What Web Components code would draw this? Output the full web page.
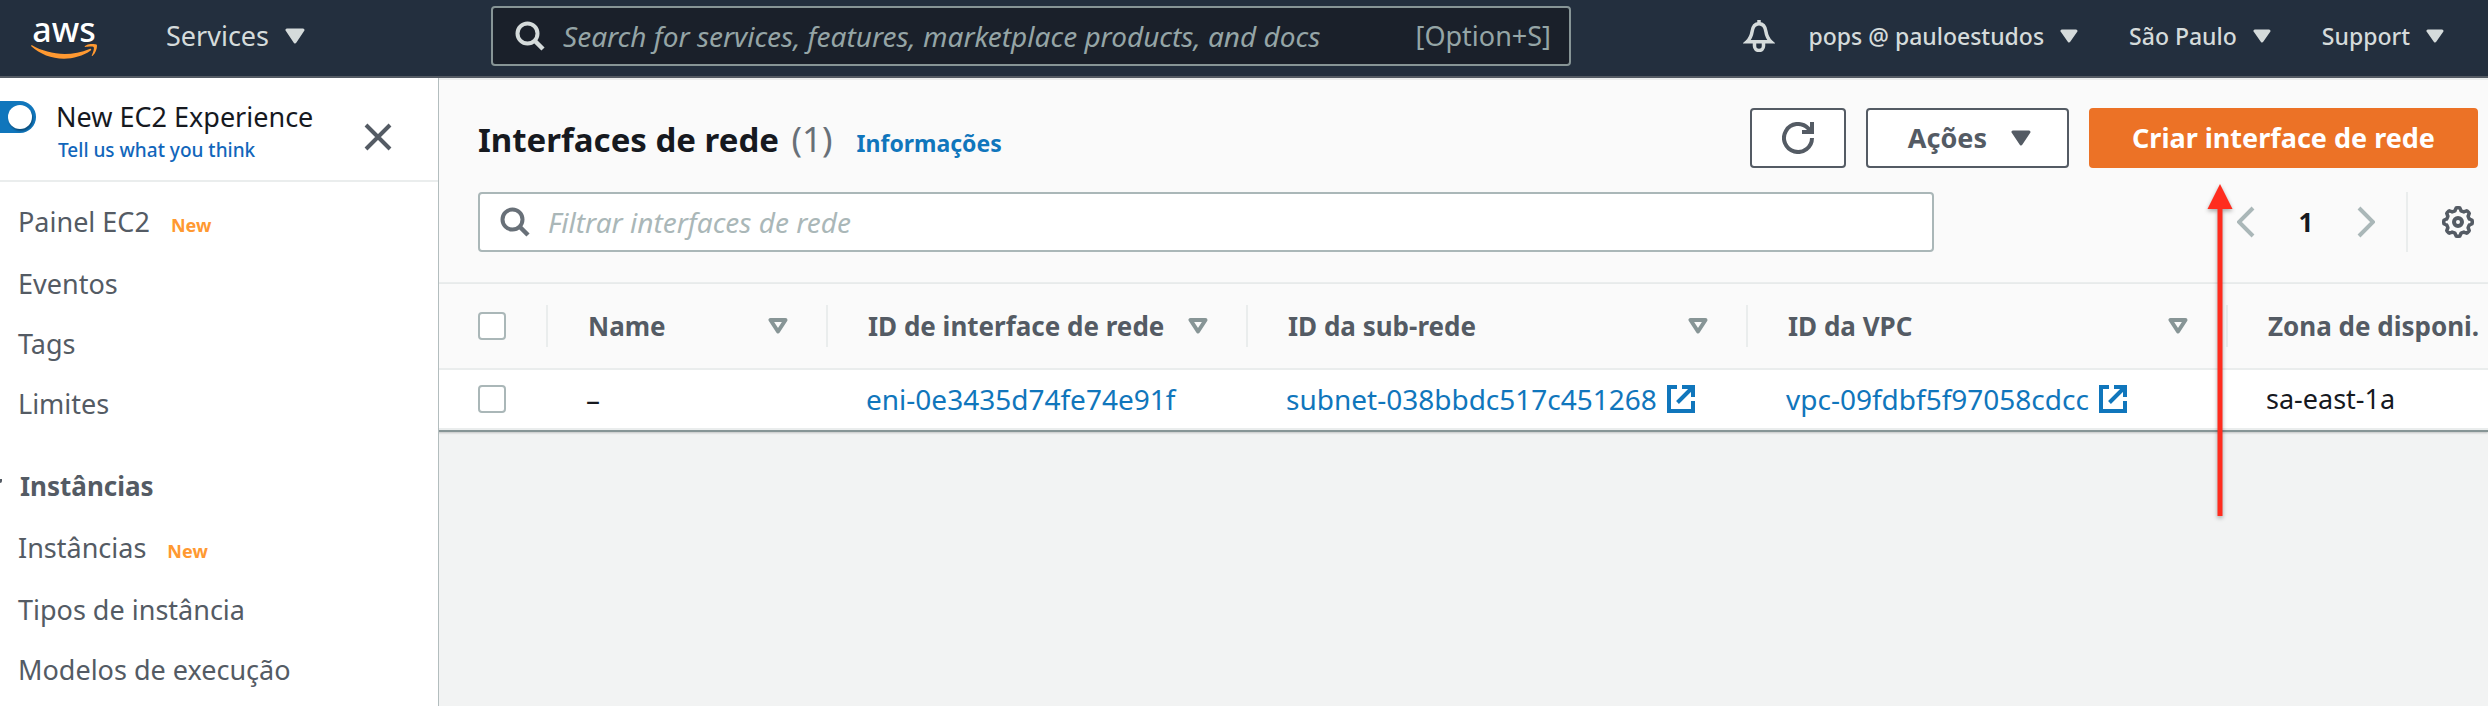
<!DOCTYPE html>
<html lang="pt-BR">
<head>
<meta charset="utf-8">
<title>Interfaces de rede | EC2</title>
<style>
  body { margin: 0; background: #f2f3f3; color: #16191f; font-family: "Noto Sans", "Open Sans", sans-serif; }
</style>
</head>
<body>
<ec2-console></ec2-console>

<script>
const define = (name, html, setup) => customElements.define(name, class extends HTMLElement {
  connectedCallback() {
    if (this.shadowRoot) return;
    const template = document.createElement('template');
    template.innerHTML = `<style>*{box-sizing:border-box}</style>` + (typeof html === 'function' ? html(this) : html);
    this.attachShadow({ mode: 'open' }).append(template.content.cloneNode(true));
    if (setup) setup(this);
  }
});

/* Outline of the settings gear: a circle whose radius swells at eight teeth. */
const gearPath = () => {
  let d = '';
  for (let i = 0; i < 96; i++) {
    const a = i / 96 * Math.PI * 2;
    const r = 12.9 + 1.4 * Math.tanh(2.5 * Math.cos(8 * a));
    d += (i ? 'L' : 'M') + (16 + r * Math.cos(a)).toFixed(2) + ' ' + (16 + r * Math.sin(a)).toFixed(2);
  }
  return d + 'Z';
};

const icons = {
  caret: [20, 16, '<path d="M2 2H18L10 14Z" fill="currentColor" stroke="currentColor" stroke-width="3" stroke-linejoin="round"/>'],
  'caret-small': [18, 14, '<path d="M2 2H16L9 12Z" fill="currentColor" stroke="currentColor" stroke-width="3" stroke-linejoin="round"/>'],
  sort: [20, 16, '<path d="M2.5 2H17.500L10 13.500Z" fill="none" stroke="currentColor" stroke-width="4" stroke-linejoin="round"/>'],
  search: [30, 30, '<circle cx="12.500" cy="12.500" r="10" fill="none" stroke="currentColor" stroke-width="4"/><path d="M19.500 19.500L28 28" stroke="currentColor" stroke-width="4.500"/>'],
  close: [28, 28, '<path d="M2 2L26 26M26 2L2 26" stroke="currentColor" stroke-width="4" fill="none"/>'],
  bell: [32, 32, '<g fill="none" stroke="currentColor" stroke-width="3.500"><path d="M4 21.700H28C24.500 18.500 23.500 15.500 22.900 11.500C22.200 6.300 19.500 3.700 16 3.700S9.800 6.300 9.100 11.500C8.500 15.500 7.500 18.500 4 21.700Z" stroke-linejoin="miter"/><path d="M16 0V4"/><path d="M11.500 22V26a4.500 4.500 0 0 0 9 0V22"/></g>'],
  refresh: [32, 32, '<g fill="none" stroke="currentColor" stroke-width="4"><path d="M30 16A14 14 0 1 1 26 6.200L28.500 9"/><path d="M30 0V10H20"/></g>'],
  prev: [18, 32, '<path d="M16 2L2 16L16 30" fill="none" stroke="currentColor" stroke-width="4"/>'],
  next: [18, 32, '<path d="M2 2L16 16L2 30" fill="none" stroke="currentColor" stroke-width="4"/>'],
  gear: [32, 32, `<path d="${gearPath()}" fill="none" stroke="currentColor" stroke-width="3.500"/><circle cx="16" cy="16" r="4" fill="none" stroke="currentColor" stroke-width="4"/>`],
  external: [28, 28, '<path d="M10 2H2V26H26V16M15 2H26V12M10.500 17.500L25 3" fill="none" stroke="currentColor" stroke-width="4"/>'],
  smile: [66, 15, '<g transform="scale(2.75) translate(0 -13.800)" fill="#ff9931"><path d="M21.698 16.207c-2.626 1.940-6.442 2.969-9.722 2.969-4.598 0-8.740-1.700-11.870-4.526-.247-.223-.024-.527.272-.351 3.384 1.963 7.559 3.153 11.877 3.153 2.914 0 6.114-.607 9.060-1.852.439-.2.814.287.383.607z"/><path d="M22.792 14.961c-.336-.43-2.220-.207-3.074-.103-.255.032-.295-.192-.063-.36 1.500-1.053 3.967-.75 4.254-.399.287.36-.08 2.826-1.485 4.007-.215.184-.423.088-.327-.151.320-.79 1.030-2.570.695-2.994z"/></g>'],
  arrow: [40, 340, '<path d="M20 22V332" stroke="#ff2c1e" stroke-width="5"/><path d="M20 0L32.500 25H7.500Z" fill="#ff2c1e"/>'],
};

define('ui-icon', host => {
  const [w, h, body] = icons[host.getAttribute('name')];
  return `<style>:host{display:inline-flex;flex:none}svg{display:block}</style>
    <svg width="${w}" height="${h}" viewBox="0 0 ${w} ${h}" aria-hidden="true">${body}</svg>`;
});

define('menu-button', host => `
  <style>
    :host { display: block; flex: none; }
    button { display: flex; align-items: center; gap: 16px; padding: 0; border: 0; background: none; color: #d5dbdb; font: 500 23px/32px "Noto Sans", sans-serif; white-space: nowrap; }
    :host([large]) button { font-size: 27px; font-weight: 400; }
  </style>
  <button type="button" aria-haspopup="true"><slot></slot><ui-icon name="${host.hasAttribute('large') ? 'caret' : 'caret-small'}"></ui-icon></button>`);

define('search-field', host => `
  <style>
    :host { display: block; min-width: 0; }
    .box { display: flex; align-items: center; gap: 18px; height: 60px; padding: 0 20px; border: 2px solid #aab7b8; border-radius: 4px; background: #fff; color: #687078; }
    input { flex: 1; min-width: 0; padding: 0; border: 0; outline: 0; background: none; color: inherit; font: 400 28px/40px "Noto Sans", sans-serif; }
    input::placeholder { color: #aab7b8; font-style: italic; opacity: 1; }
    :host([dark]) .box { padding: 0 18px 0 22px; border-color: #879596; background: #1a202a; color: #d5dbdb; }
    :host([dark]) input::placeholder { color: #95a5a6; }
    ::slotted(*) { flex: none; }
  </style>
  <div class="box"><ui-icon name="search"></ui-icon><input type="text" aria-label="${host.getAttribute('label')}" placeholder="${host.getAttribute('label')}"><slot></slot></div>`);

define('aws-logo', `
  <style>
    :host { display: block; flex: none; }
    a { display: flex; flex-direction: column; align-items: center; width: 66px; color: #fff; text-decoration: none; font: 500 34px/30px "Noto Sans", sans-serif; }
  </style>
  <a href="#"><span>aws</span><ui-icon name="smile"></ui-icon></a>`);

define('top-bar', `
  <style>
    :host { display: block; background: #232f3e; border-bottom: 2px solid #545b64; }
    header { display: flex; align-items: center; height: 76px; padding: 0 44px 4px 31px; }
    menu-button[large] { margin-left: 69px; }
    search-field { flex: 0 1 1080px; margin: 0 24px 0 186px; }
    kbd { color: #95a5a6; font: 400 27px/40px "Noto Sans", sans-serif; }
    .account { display: flex; align-items: center; gap: 51px; margin-left: auto; }
    .bell { display: flex; padding: 0; margin-right: -17px; border: 0; background: none; color: #d5dbdb; }
  </style>
  <header>
    <aws-logo></aws-logo>
    <menu-button large>Services</menu-button>
    <search-field dark label="Search for services, features, marketplace products, and docs"><kbd>[Option+S]</kbd></search-field>
    <div class="account">
      <button class="bell" type="button" aria-label="Notifications"><ui-icon name="bell"></ui-icon></button>
      <menu-button>pops @ pauloestudos</menu-button>
      <menu-button>São Paulo</menu-button>
      <menu-button>Support</menu-button>
    </div>
  </header>`);

define('nav-item', host => `
  <style>
    :host { display: block; }
    a { display: flex; align-items: baseline; gap: 21px; height: 60px; color: #545b64; text-decoration: none; font-size: 27px; line-height: 60px; white-space: nowrap; }
    :host([new]) { padding-bottom: 2px; }
    em { color: #ff9931; font-style: normal; font-size: 18px; font-weight: 700; line-height: 20px; }
  </style>
  <a href="#"><slot></slot>${host.hasAttribute('new') ? '<em>New</em>' : ''}</a>`);

define('side-nav', `
  <style>
    :host { display: block; position: relative; z-index: 1; overflow: hidden; background: #fff; border-right: 1px solid #b3bdbe; }
    .intro { display: flex; justify-content: space-between; align-items: center; height: 104px; padding: 6px 46px 0 0; border-bottom: 2px solid #eaeded; }
    .switch { display: grid; grid-template-columns: 36px auto; column-gap: 20px; align-items: center; }
    .track { display: flex; justify-content: flex-end; }
    input { appearance: none; flex: none; display: flex; justify-content: flex-end; align-items: center; width: 56px; height: 32px; margin: 0; padding: 0 4px; border-radius: 16px; background: #1076bc; }
    input::before { content: ""; width: 24px; height: 24px; border-radius: 50%; background: #fff; box-shadow: 1px 2px 2px #0005; }
    label { font-size: 27px; line-height: 36px; white-space: nowrap; }
    .think { grid-column: 2; padding-left: 2px; color: #1166bb; text-decoration: none; font-size: 19px; font-weight: 500; line-height: 30px; }
    .close { display: flex; margin-top: 10px; padding: 0; border: 0; background: none; color: #545b64; }
    nav { padding: 10px 18px 6px; }
    h2 { display: flex; align-items: center; gap: 18px; margin: 22px 0 2px -16px; color: #545b64; font-size: 26px; font-weight: 700; line-height: 60px; }
    h2::before { content: ""; width: 2px; height: 4px; margin: -10px 0 0 -2px; background: #545b64; border-bottom-right-radius: 2px; }
  </style>
  <div class="intro">
    <div class="switch">
      <span class="track"><input type="checkbox" id="new-experience" role="switch" checked></span>
      <label for="new-experience">New EC2 Experience</label>
      <a class="think" href="#">Tell us what you think</a>
    </div>
    <button class="close" type="button" aria-label="Fechar"><ui-icon name="close"></ui-icon></button>
  </div>
  <nav>
    <nav-item new>Painel EC2</nav-item>
    <nav-item>Eventos</nav-item>
    <nav-item>Tags</nav-item>
    <nav-item>Limites</nav-item>
    <h2>Instâncias</h2>
    <nav-item new>Instâncias</nav-item>
    <nav-item>Tipos de instância</nav-item>
    <nav-item>Modelos de execução</nav-item>
  </nav>`);

define('action-button', host => `
  <style>
    :host { display: block; flex: none; }
    button { display: flex; align-items: center; gap: 24px; height: 60px; padding: 0 36px 0 40px; border: 2px solid #545b64; border-radius: 4px; background: #fff; color: #545b64; font: 700 27px/40px "Noto Sans", sans-serif; white-space: nowrap; }
    :host([icon]) button { padding: 0 30px; }
    :host([primary]) button { padding: 0 41px; border-color: #ec7226; background: #ec7226; color: #fff; }
  </style>
  <button type="button" ${host.hasAttribute('icon') ? 'aria-label="Atualizar"' : ''}><slot></slot></button>`);

define('page-pager', `
  <style>
    :host { display: flex; align-items: center; flex: none; height: 60px; color: #aab7b8; }
    button { display: flex; padding: 0; border: 0; background: none; color: inherit; }
    span { width: 102px; text-align: center; color: #16191f; font-size: 26px; font-weight: 700; line-height: 40px; }
    .gear { align-items: center; height: 60px; margin-left: 31px; padding: 0 4px 0 34px; border-left: 2px solid #eaeded; color: #545b64; }
  </style>
  <button type="button" aria-label="Página anterior"><ui-icon name="prev"></ui-icon></button>
  <span>1</span>
  <button type="button" aria-label="Próxima página"><ui-icon name="next"></ui-icon></button>
  <button class="gear" type="button" aria-label="Preferências"><ui-icon name="gear"></ui-icon></button>`);

define('interfaces-table', `
  <style>
    :host { display: block; overflow: hidden; background: #fff; border-bottom: 2px solid #879596; box-shadow: 0 1px 2px #0003; }
    table { width: 100%; border-collapse: separate; border-spacing: 0; table-layout: fixed; }
    th, td { padding: 0; border-bottom: 2px solid #eaeded; text-align: left; white-space: nowrap; }
    th { height: 86px; background: #fafafa; color: #545b64; font-size: 26px; font-weight: 700; line-height: 42px; }
    th > div { display: flex; align-items: center; justify-content: space-between; height: 42px; padding: 0 38px 0 40px; border-right: 2px solid #eaeded; }
    th:last-child > div { padding-right: 0; border: 0; }
    td { height: 60px; padding-left: 38px; font-size: 28px; line-height: 40px; }
    td.zone { font-size: 27px; }
    td a { display: inline-flex; align-items: center; gap: 10px; color: #1076bc; text-decoration: none; }
    ui-icon[name=sort] { color: #879596; }
    input { appearance: none; display: block; width: 28px; height: 28px; margin: 0; border: 2px solid #aab7b8; border-radius: 4px; background: #fff; }
    td.pick { padding-left: 40px; }
    .c0 { width: 110px } .c1 { width: 280px } .c2 { width: 420px } .c3 { width: 500px } .c4 { width: 480px }
  </style>
  <table>
    <colgroup><col class="c0"><col class="c1"><col class="c2"><col class="c3"><col class="c4"><col></colgroup>
    <thead><tr>
      <th><div><input type="checkbox" aria-label="Selecionar tudo"></div></th>
      <th><div>Name<ui-icon name="sort"></ui-icon></div></th>
      <th><div>ID de interface de rede<ui-icon name="sort"></ui-icon></div></th>
      <th><div>ID da sub-rede<ui-icon name="sort"></ui-icon></div></th>
      <th><div>ID da VPC<ui-icon name="sort"></ui-icon></div></th>
      <th><div>Zona de disponi.</div></th>
    </tr></thead>
    <tbody><tr>
      <td class="pick"><input type="checkbox" aria-label="Selecionar interface"></td>
      <td>–</td>
      <td><a href="#">eni-0e3435d74fe74e91f</a></td>
      <td><a href="#">subnet-038bbdc517c451268<ui-icon name="external"></ui-icon></a></td>
      <td><a href="#">vpc-09fdbf5f97058cdcc<ui-icon name="external"></ui-icon></a></td>
      <td class="zone">sa-east-1a</td>
    </tr></tbody>
  </table>`);

define('interfaces-panel', `
  <style>
    :host { display: block; min-width: 0; }
    .head { display: grid; gap: 24px; padding: 28px 10px 30px 40px; background: #fafafa; border: solid #eaeded; border-width: 2px 0; }
    .row { display: flex; align-items: center; justify-content: space-between; gap: 20px; }
    .title { display: flex; align-items: baseline; padding-top: 2px; white-space: nowrap; }
    h1 { margin: 0; font-size: 33px; font-weight: 700; line-height: 44px; }
    h1 span { margin-left: 4px; color: #687078; font-size: 35px; font-weight: 400; }
    .title a { margin-left: 24px; color: #1076bc; text-decoration: none; font-size: 23px; font-weight: 700; }
    .actions { display: flex; gap: 20px; }
    search-field { flex: 0 1 1456px; }
  </style>
  <div class="head">
    <div class="row">
      <div class="title"><h1>Interfaces de rede <span>(1)</span></h1><a href="#">Informações</a></div>
      <div class="actions">
        <action-button icon><ui-icon name="refresh"></ui-icon></action-button>
        <action-button>Ações<ui-icon name="caret"></ui-icon></action-button>
        <action-button primary>Criar interface de rede</action-button>
      </div>
    </div>
    <div class="row"><search-field label="Filtrar interfaces de rede"></search-field><page-pager></page-pager></div>
  </div>
  <interfaces-table></interfaces-table>`);

define('ec2-console', `
  <style>
    :host { display: flex; flex-direction: column; min-height: 100vh; position: relative; overflow: hidden; }
    .body { flex: 1; display: grid; grid-template-columns: 439px minmax(0, 1fr); }
    interfaces-panel { margin-left: -1px; }
    /* Callout arrow laid over the page, pointing at the create button. */
    .callout { position: absolute; z-index: 2; top: 184px; right: 248px; pointer-events: none; filter: drop-shadow(0 2px 2px #0005); }
  </style>
  <top-bar></top-bar>
  <div class="body">
    <side-nav></side-nav>
    <interfaces-panel></interfaces-panel>
  </div>
  <ui-icon class="callout" name="arrow"></ui-icon>`);
</script>
</body>
</html>
